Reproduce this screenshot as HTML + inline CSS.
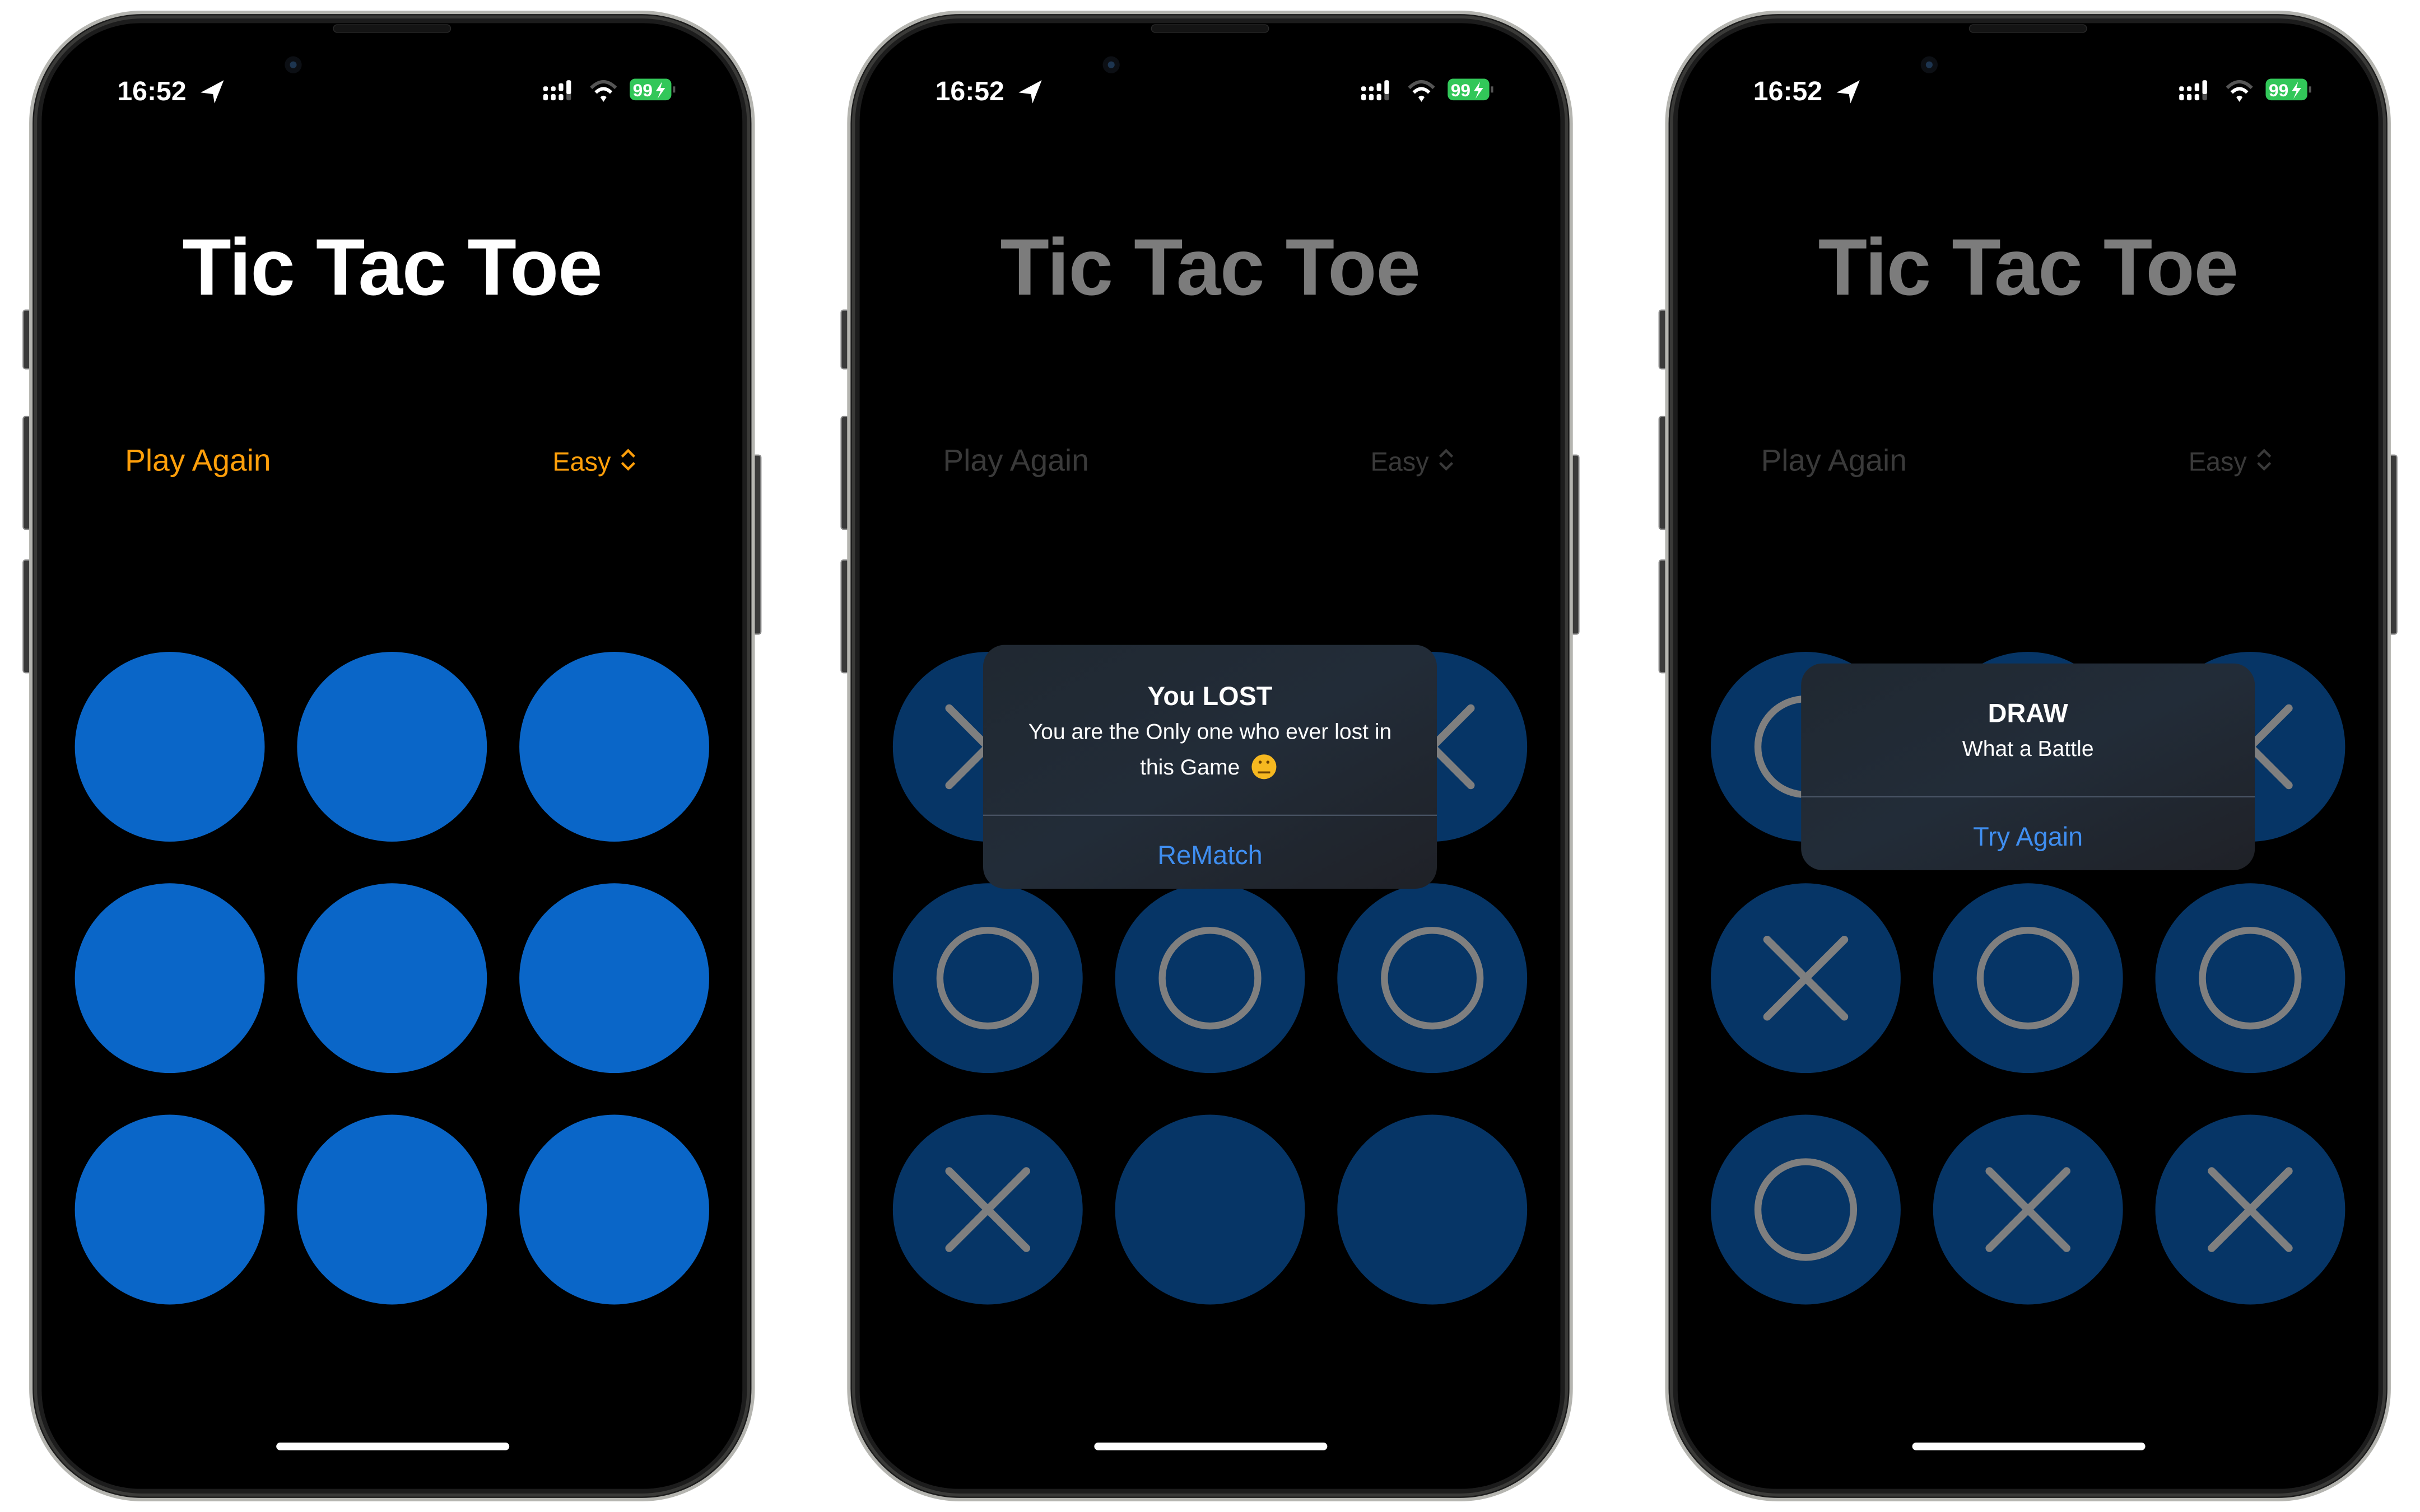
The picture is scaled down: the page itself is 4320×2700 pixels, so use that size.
<!DOCTYPE html>
<html><head><meta charset="utf-8"><style>
html,body{margin:0;padding:0;background:#fff;width:4320px;height:2700px;overflow:hidden}
svg{display:block}
text{font-family:"Liberation Sans",sans-serif}
</style></head><body>
<svg width="4320" height="2700" viewBox="0 0 1568 980" preserveAspectRatio="none" xmlns="http://www.w3.org/2000/svg">
<defs>
<linearGradient id="al" x1="0" y1="0" x2="1" y2="1"><stop offset="0" stop-color="#202831"/><stop offset="0.5" stop-color="#222c38"/><stop offset="1" stop-color="#1f2127"/></linearGradient>
<g id="frame">
  <rect x="15" y="201" width="5" height="38" rx="1.5" fill="#3a3a3a" stroke="#888" stroke-width="0.8"/>
  <rect x="15" y="270" width="5" height="73" rx="1.5" fill="#3a3a3a" stroke="#888" stroke-width="0.8"/>
  <rect x="15" y="363" width="5" height="73" rx="1.5" fill="#3a3a3a" stroke="#888" stroke-width="0.8"/>
  <rect x="488" y="295" width="5" height="116" rx="1.5" fill="#3a3a3a" stroke="#888" stroke-width="0.8"/>
  <rect x="20" y="8" width="468" height="964" rx="72" fill="#1c1c1c" stroke="#b5b5b0" stroke-width="2.2"/>
  <rect x="23" y="11" width="462" height="958" rx="69" fill="none" stroke="#3a3a38" stroke-width="2"/>
  <rect x="27" y="15" width="454" height="950" rx="64" fill="#000"/>
  <rect x="216" y="16" width="76" height="5" rx="2.5" fill="#141414" stroke="#2a2a2a" stroke-width="0.5"/>
  <circle cx="190" cy="42" r="5.5" fill="#0c0f14"/><circle cx="190" cy="42" r="2.2" fill="#1d3550"/>
  <text x="76" y="65" font-size="17.5" font-weight="600" fill="#fff">16:52</text>
  <path d="M130 60 L145 52 L139 67 L138 61 Z" fill="#fff"/>
  <rect x="352" y="61" width="3" height="4" rx="1" fill="#fff"/><rect x="352" y="56" width="3" height="3" rx="1" fill="#fff"/>
  <rect x="357" y="61" width="3" height="4" rx="1" fill="#fff"/><rect x="357" y="56" width="3" height="3" rx="1" fill="#fff"/>
  <rect x="362" y="61" width="3" height="4" rx="1" fill="#fff"/><rect x="362" y="54" width="3" height="5" rx="1" fill="#fff"/>
  <rect x="367" y="52" width="3" height="13" rx="1" fill="#555"/><rect x="367" y="52" width="3" height="9" rx="1" fill="#fff"/>
  <path d="M383 57 Q391 49 399 57" stroke="#555" stroke-width="2.2" fill="none"/>
  <path d="M386 60 Q391 55 396 60" stroke="#fff" stroke-width="2.2" fill="none"/>
  <path d="M389 63 L391 66 L393 63 Q391 61 389 63Z" fill="#fff"/>
  <rect x="408" y="51" width="27" height="14" rx="3.5" fill="#32c759"/>
  <rect x="436" y="56" width="1.5" height="4" fill="#555"/>
  <text x="410" y="62.5" font-size="11.5" font-weight="700" fill="#fff">99</text>
  <path d="M429 53 L425 59 L428 59 L426 64 L431 57 L428 57 Z" fill="#fff"/>
  <rect x="179" y="935" width="151" height="5" rx="2.5" fill="#fff"/>
</g>
<g id="X"><path d="M-25 -25 L25 25 M25 -25 L-25 25" stroke="#7f7f7f" stroke-width="5" stroke-linecap="round"/></g>
<g id="O"><circle r="31" fill="none" stroke="#7f7f7f" stroke-width="4.5"/></g>
</defs>

<use href="#frame"/>
<text x="254" y="191" font-size="52" font-weight="700" fill="#fff" text-anchor="middle" letter-spacing="-0.5">Tic Tac Toe</text>
<text x="81" y="305" font-size="20" fill="#ff9f0a">Play Again</text>
<text x="358" y="305" font-size="17" fill="#ff9f0a">Easy</text>
<path d="M403 296 L407 292 L411 296 M403 300 L407 304 L411 300" stroke="#ff9f0a" stroke-width="1.6" fill="none"/>
<g fill="#0a66c8">
<circle cx="110" cy="484" r="61.5"/><circle cx="254" cy="484" r="61.5"/><circle cx="398" cy="484" r="61.5"/>
<circle cx="110" cy="634" r="61.5"/><circle cx="254" cy="634" r="61.5"/><circle cx="398" cy="634" r="61.5"/>
<circle cx="110" cy="784" r="61.5"/><circle cx="254" cy="784" r="61.5"/><circle cx="398" cy="784" r="61.5"/>
</g>

<g transform="translate(530 0)">
<use href="#frame"/>
<text x="254" y="191" font-size="52" font-weight="700" fill="#7c7c7c" text-anchor="middle" letter-spacing="-0.5">Tic Tac Toe</text>
<text x="81" y="305" font-size="20" fill="#3a3a3a">Play Again</text>
<text x="358" y="305" font-size="17" fill="#3a3a3a">Easy</text>
<path d="M403 296 L407 292 L411 296 M403 300 L407 304 L411 300" stroke="#3a3a3a" stroke-width="1.6" fill="none"/>
<g fill="#063566">
<circle cx="110" cy="484" r="61.5"/><circle cx="254" cy="484" r="61.5"/><circle cx="398" cy="484" r="61.5"/>
<circle cx="110" cy="634" r="61.5"/><circle cx="254" cy="634" r="61.5"/><circle cx="398" cy="634" r="61.5"/>
<circle cx="110" cy="784" r="61.5"/><circle cx="254" cy="784" r="61.5"/><circle cx="398" cy="784" r="61.5"/>
</g>
<use href="#X" x="110" y="484"/><use href="#X" x="398" y="484"/>
<use href="#O" x="110" y="634"/><use href="#O" x="254" y="634"/><use href="#O" x="398" y="634"/>
<use href="#X" x="110" y="784"/>
<rect x="107" y="418" width="294" height="158" rx="14" fill="url(#al)"/>
<text x="254" y="457" font-size="17" font-weight="700" fill="#fff" text-anchor="middle">You LOST</text>
<text x="254" y="479" font-size="14.2" fill="#fff" text-anchor="middle">You are the Only one who ever lost in</text>
<text x="241" y="502" font-size="14.2" fill="#fff" text-anchor="middle">this Game</text>
<circle cx="289" cy="497" r="8" fill="#f6b820"/><rect x="285" y="500" width="8" height="1.3" fill="#6a4000"/><circle cx="286.5" cy="494" r="1" fill="#6a4000"/><circle cx="291.5" cy="494" r="1" fill="#6a4000"/>
<rect x="107" y="528" width="294" height="0.8" fill="#4a5566"/>
<text x="254" y="560" font-size="17" fill="#3f8ef0" text-anchor="middle">ReMatch</text>
</g>

<g transform="translate(1060 0)">
<use href="#frame"/>
<text x="254" y="191" font-size="52" font-weight="700" fill="#7c7c7c" text-anchor="middle" letter-spacing="-0.5">Tic Tac Toe</text>
<text x="81" y="305" font-size="20" fill="#3a3a3a">Play Again</text>
<text x="358" y="305" font-size="17" fill="#3a3a3a">Easy</text>
<path d="M403 296 L407 292 L411 296 M403 300 L407 304 L411 300" stroke="#3a3a3a" stroke-width="1.6" fill="none"/>
<g fill="#063566">
<circle cx="110" cy="484" r="61.5"/><circle cx="254" cy="484" r="61.5"/><circle cx="398" cy="484" r="61.5"/>
<circle cx="110" cy="634" r="61.5"/><circle cx="254" cy="634" r="61.5"/><circle cx="398" cy="634" r="61.5"/>
<circle cx="110" cy="784" r="61.5"/><circle cx="254" cy="784" r="61.5"/><circle cx="398" cy="784" r="61.5"/>
</g>
<use href="#O" x="110" y="484"/><use href="#X" x="398" y="484"/>
<use href="#X" x="110" y="634"/><use href="#O" x="254" y="634"/><use href="#O" x="398" y="634"/>
<use href="#O" x="110" y="784"/><use href="#X" x="254" y="784"/><use href="#X" x="398" y="784"/>
<rect x="107" y="430" width="294" height="134" rx="14" fill="url(#al)"/>
<text x="254" y="468" font-size="17" font-weight="700" fill="#fff" text-anchor="middle">DRAW</text>
<text x="254" y="490" font-size="14.2" fill="#fff" text-anchor="middle">What a Battle</text>
<rect x="107" y="516" width="294" height="0.8" fill="#4a5566"/>
<text x="254" y="548" font-size="17" fill="#3f8ef0" text-anchor="middle">Try Again</text>
</g>
</svg>
</body></html>
